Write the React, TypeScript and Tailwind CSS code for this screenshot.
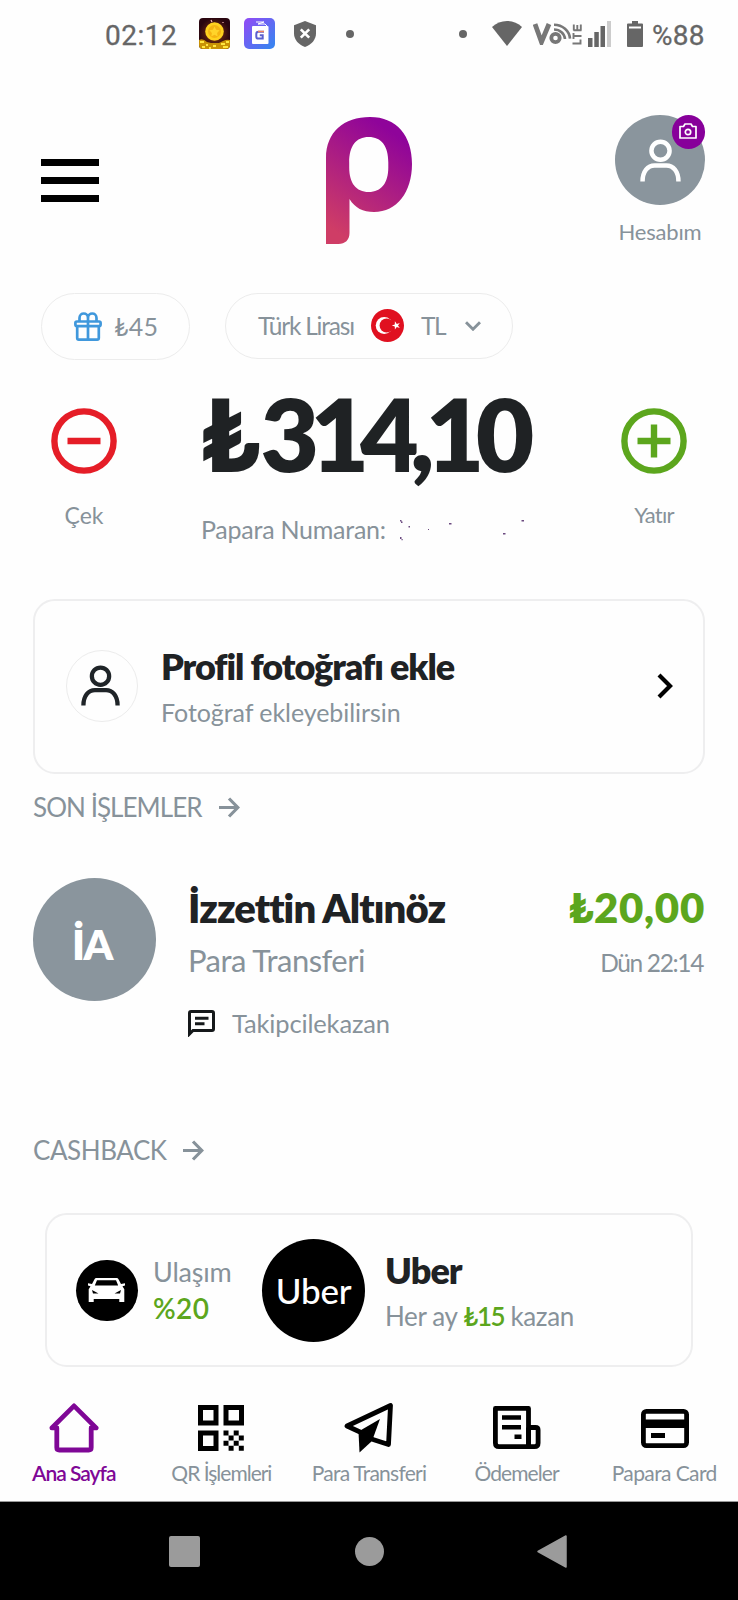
import React from "react";

function UserGlyph({ className }: { className?: string }) {
  return (
    <svg viewBox="0 0 42 44" className={className} fill="none" stroke="currentColor" strokeWidth="4.600">
      <circle cx="21" cy="12" r="9.300" />
      <path d="M2.600 43.500C2.600 33 8 27 15 27h12c7 0 12.400 6 12.400 16.500" />
    </svg>
  );
}

function ArrowRight() {
  return (
    <svg viewBox="0 0 21 21" className="h-[21px] w-[21px]" fill="none" stroke="#87929a" strokeWidth="3.200">
      <path d="M0 10.500h18.500M10 1.500l8.800 9-8.800 9" />
    </svg>
  );
}

function StatusBar() {
  return (
    <header className="flex h-[67px] w-[738px] items-center pl-[105px] text-[#666]">
      <span className="mt-1 w-[94px] whitespace-nowrap font-['Roboto',sans-serif] text-[28px] leading-8 tracking-[0.500px] [-webkit-text-stroke:0.300px_#666]">02:12</span>
      <svg viewBox="0 0 31 31" className="h-[31px] w-[31px]">
        <defs>
          <clipPath id="coinClip"><rect width="31" height="31" rx="4" /></clipPath>
          <radialGradient id="coinBg"><stop offset="0" stopColor="#8a3a12" /><stop offset="1" stopColor="#2a0610" /></radialGradient>
        </defs>
        <g clipPath="url(#coinClip)">
          <rect width="31" height="31" fill="url(#coinBg)" />
          <path d="M0 22q4-2 8 2l4 1h8l4-2q4-2 7-1v9H0z" fill="#c99205" />
          <path d="M1 24h4M7 27h2M14 28h3M22 26h4M27 24h3M3 29h3M24 29h5M10 30h2" stroke="#ffe640" strokeWidth="2" />
          <circle cx="15.500" cy="13.500" r="9.300" fill="#ffd21f" />
          <circle cx="15.500" cy="13.500" r="6.500" fill="#f5b412" />
          <path d="M15.500 8.500l1.600 3.300 3.600.5-2.600 2.600.6 3.600-3.200-1.700-3.200 1.700.6-3.600-2.600-2.600 3.600-.5z" fill="#ffd42a" />
          <path d="M12 2l1 2M24 4v1" stroke="#f5b8b8" strokeWidth="1.200" />
        </g>
      </svg>
      <svg viewBox="0 0 31 31" className="ml-[14px] h-[31px] w-[31px]">
        <defs>
          <linearGradient id="gBg" x1="0" y1="0" x2="1" y2="1"><stop offset="0.100" stopColor="#8a4ff5" /><stop offset="0.900" stopColor="#3b82f0" /></linearGradient>
        </defs>
        <rect width="31" height="31" rx="5" fill="url(#gBg)" />
        <path d="M12 4h8l-6 2h7l2 2" fill="none" stroke="#fff" strokeWidth="1" />
        <rect x="8" y="8" width="16.500" height="18" rx="1" fill="#fff" />
        <path d="M20 13.800h-5.500c-1.500 0-2.200.7-2.200 2.200v2.400c0 1.500.7 2.200 2.200 2.200h4.200v-3.400h-2.900" fill="none" stroke="#5b5fd0" strokeWidth="2" />
        <path d="M14 13.500h6" stroke="#f08060" strokeWidth="1.500" />
      </svg>
      <svg viewBox="0 0 22 26" className="ml-[19px] h-[26px] w-[22px]">
        <path d="M11 0l11 4.200v8.300c0 6-4.500 11.300-11 13.500C4.500 23.800 0 18.500 0 12.500V4.200z" fill="#666" />
        <path d="M6.800 8.300l8.400 8.400M15.200 8.300l-8.400 8.400" stroke="#fff" strokeWidth="2.600" />
      </svg>
      <span className="ml-[30px] h-2 w-2 rounded-full bg-[#666]" />
      <span className="ml-[105px] h-2 w-2 rounded-full bg-[#666]" />
      <svg viewBox="0 0 30 25" className="ml-[25px] h-[25px] w-[30px]">
        <path d="M0 6C8-2 22-2 30 6L15 25z" fill="#666" />
      </svg>
      <svg viewBox="0 0 49 22" className="ml-[11px] h-[22px] w-[49px]" fill="none" stroke="#777">
        <path d="M2 1l6.500 18L16 1" strokeWidth="4.800" />
        <circle cx="22.500" cy="15" r="4.200" strokeWidth="3.800" />
        <path d="M21 6.500c6 0 10.500 4 11 9.500" strokeWidth="2.600" />
        <path d="M21 1.700c8.500 0 15.500 6 16 14" strokeWidth="2.600" />
        <path d="M39.500 20.500h8.500M47.500 16.500v5M40.500 10v6M41 13h7.500M40.800 7.500V1.500M47.800 7.500V1.500M44.300 7V2M40.500 7.300h8" strokeWidth="1.900" />
      </svg>
      <svg viewBox="0 0 23 26" className="ml-[6px] h-[26px] w-[23px]">
        <path d="M0 17h4.500v9H0zM6.300 11h4.500v15H6.300zM12.500 5h4.500v21h-4.500z" fill="#666" />
        <path d="M19 0h4v26h-4z" fill="#ccc" />
      </svg>
      <svg viewBox="0 0 16 26" className="ml-4 h-[26px] w-4">
        <path d="M5 0h6v2.500h4q1 0 1 1V25q0 1-1 1H1q-1 0-1-1V3.500q0-1 1-1h4z" fill="#666" />
        <path d="M2 5.500h12v2H2z" fill="#fff" />
      </svg>
      <span className="ml-[9px] mt-1 whitespace-nowrap font-['Roboto',sans-serif] text-[28px] leading-8 tracking-[0.200px] [-webkit-text-stroke:0.300px_#666]">%88</span>
    </header>
  );
}

function TopBar() {
  return (
    <div className="flex h-[203px] w-[738px] items-start pl-[41px]">
      <button className="mt-[91.500px] flex w-[57.500px] flex-col gap-[10.500px]" aria-label="Menü">
        <span className="h-[7.500px] w-full bg-black" />
        <span className="h-[7.500px] w-full bg-black" />
        <span className="h-[7.500px] w-full bg-black" />
      </button>
      <svg viewBox="0 0 86 127" className="ml-[227.500px] mt-[50px] h-[127px] w-[86px]">
        <defs>
          <linearGradient id="brand" gradientUnits="userSpaceOnUse" x1="6" y1="112" x2="70" y2="18">
            <stop offset="0" stopColor="#cf3d66" />
            <stop offset="1" stopColor="#8f049a" />
          </linearGradient>
        </defs>
        <path
          fillRule="evenodd"
          fill="url(#brand)"
          d="M0 127V41C0 15 18 0 44 0c27 0 42 19 42 47 0 28-15 48-38 48-11 0-19-4-24.500-13v34c0 7-4.500 11-11 11zM42.700 20C30 20 23.200 29 23.200 45.500v5C23.200 66 30 75 42.700 75s19.600-9 19.600-24.500v-5C62.300 29 55.400 20 42.700 20z"
        />
      </svg>
      <div className="ml-[203px] mt-12 flex w-[90px] flex-col items-center">
        <div className="relative flex h-[90px] w-[90px] items-center justify-center rounded-full bg-[#8a959d] text-white">
          <UserGlyph className="h-[43px] w-[41px]" />
          <span className="absolute right-0 top-0 flex h-[33.500px] w-[33.500px] items-center justify-center rounded-full bg-[#87009a]">
            <svg viewBox="0 0 18 16" className="-mt-0.5 h-4 w-[18px]" fill="none" stroke="#fff" strokeWidth="1.700">
              <path d="M1 3.500h3.500L6 1h6l1.500 2.500H17V15H1z" strokeLinejoin="round" />
              <circle cx="9" cy="9" r="2.700" />
            </svg>
          </span>
        </div>
        <span className="mt-[14px] whitespace-nowrap text-[22px] leading-[26px] tracking-[-0.200px]">Hesabım</span>
      </div>
    </div>
  );
}

function Pills() {
  return (
    <div className="flex h-[110px] items-start pl-[41px] pt-[22.500px]">
      <div className="flex h-[67px] w-[149px] items-center rounded-full border-[1.500px] border-[#ececec] pl-[32px]">
        <svg viewBox="0 0 28 29" className="h-[29px] w-[28px]" fill="none" stroke="#4098dc" strokeWidth="2.700">
          <rect x="1.400" y="9.500" width="25.200" height="4.600" rx="1.500" />
          <path d="M3.200 14.500V26q0 1.600 1.600 1.600h18.400q1.600 0 1.600-1.600V14.500M14 9.500v18" />
          <path d="M5.500 9.500V6c0-6 8.500-6 8.500 0v3.500V6c0-6 8.500-6 8.500 0v3.500" />
        </svg>
        <span className="ml-3 whitespace-nowrap text-[25px] leading-[30px] tracking-[0.200px]">₺45</span>
      </div>
      <div className="ml-[35px] flex h-[66px] w-[288px] items-center rounded-full border-[1.500px] border-[#ececec] pl-[32px]">
        <span className="w-[113px] whitespace-nowrap text-[24.500px] leading-[30px] tracking-[-1.200px]">Türk Lirası</span>
        <svg viewBox="0 0 33 33" className="h-[33px] w-[33px]">
          <circle cx="16.500" cy="16.500" r="16.500" fill="#e01020" />
          <circle cx="13.200" cy="16.500" r="8.500" fill="#fff" />
          <circle cx="15.600" cy="16.500" r="7" fill="#e01020" />
          <path d="M20.800 16.500l3-1 .1-3.200 1.900 2.600 3-.9-1.800 2.500 1.800 2.600-3-1-1.900 2.500-.1-3.100z" fill="#fff" />
        </svg>
        <span className="ml-[17px] w-[42px] whitespace-nowrap text-[24.500px] leading-[30px] tracking-[-1.500px]">TL</span>
        <svg viewBox="0 0 16 10" className="ml-0.5 h-[10px] w-4" fill="none" stroke="#87929a" strokeWidth="2.900">
          <path d="M1 1.200l7 7 7-7" />
        </svg>
      </div>
    </div>
  );
}

function Balance() {
  return (
    <div className="flex h-[219px] items-start">
      <div className="ml-[51px] mt-[28px] flex w-[66px] flex-col items-center">
        <svg viewBox="0 0 66 66" className="h-[66px] w-[66px]" fill="none" stroke="#e51d27" strokeWidth="6.400">
          <circle cx="33" cy="33" r="29.600" />
          <path d="M16.500 33h33" />
        </svg>
        <span className="mt-7 whitespace-nowrap text-[23px] leading-[26px]">Çek</span>
      </div>
      <div className="ml-[84px] mt-[3px] w-[335px]">
        <div className="whitespace-nowrap text-[101px] font-extrabold leading-[100px] tracking-[-8.700px] text-[#1f2224]">
          <span className="tracking-[1px]">₺</span>314,10
        </div>
        <div className="mt-[31px] flex items-center">
          <span className="w-[197px] whitespace-nowrap text-[25px] leading-[30px] tracking-[-0.250px]">Papara Numaran:</span>
          <svg viewBox="0 0 130 24" className="h-6 w-[130px]" fill="#6b4a80">
            <path d="M2 3h1.500v1.500H2zM3 4.500h1.500V6H3zM10.500 9h1.500v1.500h-1.500zM2 20h1.500v2H2zM3.500 22h1.200v1.200H3.500zM30 12h1v1h-1zM51 6h2.500v1.500H51zM123.500 3h2.500v1.500h-2.500zM105 16h2.500v1.500H105z" />
          </svg>
        </div>
      </div>
      <div className="ml-[85px] mt-[28px] flex w-[66px] flex-col items-center">
        <svg viewBox="0 0 66 66" className="h-[66px] w-[66px]" fill="none" stroke="#5ca61d" strokeWidth="6.400">
          <circle cx="33" cy="33" r="29.600" />
          <path d="M16.500 33h33M33 16.500v33" />
        </svg>
        <span className="mt-7 whitespace-nowrap text-[22px] leading-[26px] tracking-[-0.800px]">Yatır</span>
      </div>
    </div>
  );
}

function ProfileCard() {
  return (
    <div className="ml-[33px] flex h-[175px] w-[672px] items-center rounded-[22px] border-2 border-[#eeeeef] pb-[2px] pl-[31px]">
      <div className="flex h-[72px] w-[72px] items-center justify-center rounded-full border-[1.500px] border-[#ececec] text-[#1f2428]">
        <UserGlyph className="-ml-[3px] h-[41px] w-[39px]" />
      </div>
      <div className="ml-[23px] w-[496px]">
        <div className="whitespace-nowrap text-[36px] font-extrabold leading-[44px] tracking-[-1.050px] text-[#1f2224]">Profil fotoğrafı ekle</div>
        <div className="mt-[9px] whitespace-nowrap text-[25px] leading-[30px] tracking-[-0.060px]">Fotoğraf ekleyebilirsin</div>
      </div>
      <svg viewBox="0 0 16 26" className="h-[26px] w-4" fill="none" stroke="#000" strokeWidth="4.200">
        <path d="M2 2l11 11L2 24" />
      </svg>
    </div>
  );
}

function Transactions() {
  return (
    <section className="h-[360px] pl-[33px] pt-[17px]">
      <div className="flex h-8 items-center">
        <span className="w-[186px] whitespace-nowrap text-[26px] leading-8 tracking-[-0.950px]">SON İŞLEMLER</span>
        <ArrowRight />
      </div>
      <div className="mt-[55px] flex w-[672px] items-start">
        <div className="flex h-[123px] w-[123px] items-center justify-center rounded-full bg-[#8a959d]">
          <span className="-ml-[5px] mt-[9px] whitespace-nowrap text-[42px] font-extrabold leading-[48px] tracking-[-1.400px] text-white">İA</span>
        </div>
        <div className="ml-8 mt-[6px]">
          <div className="whitespace-nowrap text-[40px] font-extrabold leading-[48px] tracking-[-0.900px] text-[#1f2224]">İzzettin Altınöz</div>
          <div className="mt-[9px] whitespace-nowrap text-[31px] leading-[38px] tracking-[-0.550px]">Para Transferi</div>
          <div className="mt-[29px] flex h-[30px] items-center">
            <svg viewBox="0 0 27 27" className="h-[27px] w-[27px]" fill="none" stroke="#15181a" strokeWidth="3">
              <path d="M1.500 24V3q0-1.500 1.500-1.500h21q1.500 0 1.500 1.500v16q0 1.500-1.500 1.500H5z" />
              <path d="M7 8.200h13.500M7 13.700h9.500" />
            </svg>
            <span className="ml-[17px] whitespace-nowrap text-[25.500px] leading-[30px] tracking-[-0.150px]">Takipcilekazan</span>
          </div>
        </div>
        <div className="ml-auto mt-[5px] flex flex-col items-end">
          <div className="whitespace-nowrap text-[42px] font-extrabold leading-[48px] tracking-[0.700px] text-[#5ca61d]">₺20,00</div>
          <div className="mt-[17px] whitespace-nowrap pr-0.5 text-[24.500px] leading-[30px] tracking-[-1.350px]">Dün 22:14</div>
        </div>
      </div>
    </section>
  );
}

function Cashback() {
  return (
    <section className="h-[268px] pl-[33px]">
      <div className="flex h-8 items-center">
        <span className="w-[150px] whitespace-nowrap text-[26px] leading-8 tracking-[-0.450px]">CASHBACK</span>
        <ArrowRight />
      </div>
      <div className="ml-3 mt-[47px] flex h-[154px] w-[648px] items-center rounded-[22px] border-2 border-[#eeeeef] pl-[29px]">
        <div className="flex h-[61px] w-[62px] items-center justify-center rounded-full bg-black">
          <svg viewBox="0 0 37 24" className="-ml-0.5 h-6 w-[37px]">
            <path fillRule="evenodd" fill="#fff" d="M8.500 0h20q1.500 0 2 1.300L33 6l4-.8v2.300l-2.500.8 1.800 3V24h-5v-3H5.700v3h-5V11.300l1.800-3L0 7.500V5.200L4 6l2.500-4.700Q7 0 8.500 0zM9 2.200L6.800 7.500h23.400L28 2.200zM4 12l1 3.500h5.500zM33 12l-1 3.500h-5.500z" />
          </svg>
        </div>
        <div className="ml-[15px] w-[109px]">
          <div className="whitespace-nowrap text-[27px] leading-8 tracking-[-0.200px]">Ulaşım</div>
          <div className="mt-1 whitespace-nowrap text-[28px] font-semibold leading-8 tracking-[0.400px] text-[#5ca61d]">%20</div>
        </div>
        <div className="flex h-[103px] w-[103px] items-center justify-center rounded-full bg-black">
          <span className="whitespace-nowrap text-[35px] font-medium leading-10 tracking-[-0.300px] text-white">Uber</span>
        </div>
        <div className="ml-[20px]">
          <div className="whitespace-nowrap text-[36px] font-extrabold leading-[44px] tracking-[-1px] text-[#1f2224]">Uber</div>
          <div className="mt-2 whitespace-nowrap text-[26px] leading-8 tracking-[-0.350px]">
            Her ay <span className="font-semibold tracking-[-1.500px] text-[#5ca61d]">₺15</span> kazan
          </div>
        </div>
      </div>
    </section>
  );
}

function BottomNav() {
  return (
    <nav className="grid h-[100px] w-[738px] grid-cols-5 border-b border-[#999] pt-px text-[21px] leading-[26px]">
      <div className="flex flex-col items-center">
        <svg viewBox="0 0 50 50" className="h-[50px] w-[50px]" fill="none" stroke="#7f0796" strokeWidth="4.800" strokeLinejoin="round" strokeLinecap="round">
          <path d="M7.800 25v19.500q0 2.500 2.500 2.500h29.400q2.500 0 2.500-2.500V25" />
          <path d="M7.800 25H2.800L25 2.800 47.200 25h-5" strokeWidth="4.600" />
        </svg>
        <span className="mt-[7px] whitespace-nowrap font-semibold tracking-[-1px] text-[#7f0796]">Ana Sayfa</span>
      </div>
      <div className="flex flex-col items-center">
        <svg viewBox="0 0 46 46" className="mb-[2px] mt-[2px] h-[46px] w-[46px]">
          <path fill="none" stroke="#000" strokeWidth="5" d="M2.500 2.500h15.500v15.500H2.500zM28 2.500h15.500v15.500H28zM2.500 28h15.500v15.500H2.500z" />
          <path d="M25.500 25.500h5v5h-5zM35.700 25.500h5v5h-5zM30.600 30.600h5v5h-5zM40.800 30.600h5v5h-5zM25.500 35.700h5v5h-5zM35.700 35.700h5v5h-5zM30.600 40.800h5v5h-5zM40.800 40.800h5v5h-5z" />
        </svg>
        <span className="mt-[7px] whitespace-nowrap tracking-[-1px]">QR İşlemleri</span>
      </div>
      <div className="flex flex-col items-center">
        <svg viewBox="0 0 50 50" className="h-[50px] w-[50px]">
          <path d="M3 23L46.500 2.500 44.500 41.500 29 36.500 16 29z" fill="none" stroke="#000" strokeWidth="4.800" strokeLinejoin="round" />
          <path d="M14.500 28.500L36 16 28 38 15.500 49.500z" />
        </svg>
        <span className="mt-[7px] whitespace-nowrap tracking-[-0.750px]">Para Transferi</span>
      </div>
      <div className="flex flex-col items-center">
        <svg viewBox="0 0 48 43" className="mb-1 mt-[3px] h-[43px] w-[48px]" fill="none" stroke="#000" strokeWidth="4.800">
          <path d="M35.500 40.600H6q-3.600 0-3.600-3.600V2.400h33.100z" strokeLinejoin="round" />
          <path d="M35.500 21.500h7q2.600 0 2.600 2.600V37q0 3.600-3.600 3.600h-6V21.500" />
          <path d="M9 11.500h19M9 21.300h19M21.500 30.700h7" strokeWidth="4.600" />
        </svg>
        <span className="mt-[7px] whitespace-nowrap tracking-[-0.900px]">Ödemeler</span>
      </div>
      <div className="flex flex-col items-center">
        <svg viewBox="0 0 48 39" className="mb-[5px] ml-0.5 mt-[6px] h-[39px] w-[48px]">
          <rect x="2.400" y="2.400" width="43.200" height="34.200" rx="3" fill="none" stroke="#000" strokeWidth="4.800" />
          <path d="M2 10.500h44v8.500H2zM10 24h14v5H10z" />
        </svg>
        <span className="mt-[7px] whitespace-nowrap tracking-[-0.600px]">Papara Card</span>
      </div>
    </nav>
  );
}

function SystemNav() {
  return (
    <footer className="flex h-[98px] w-[738px] items-center bg-black pl-[169px]">
      <span className="h-[31px] w-[31px] rounded-[2px] bg-[#9b9b9b]" />
      <span className="ml-[154.500px] h-[29px] w-[29px] rounded-full bg-[#9b9b9b]" />
      <svg viewBox="0 0 30 33" className="ml-[153px] h-[33px] w-[30px]">
        <path d="M1 16.500L29 1v31z" fill="#9b9b9b" stroke="#9b9b9b" strokeWidth="1.500" strokeLinejoin="round" />
      </svg>
    </footer>
  );
}

export default function App() {
  return (
    <div className="h-[1600px] w-[738px] overflow-hidden bg-[#fefefe] font-['Lato',sans-serif] text-[#87929a]">
      <StatusBar />
      <TopBar />
      <Pills />
      <Balance />
      <ProfileCard />
      <Transactions />
      <Cashback />
      <BottomNav />
      <SystemNav />
    </div>
  );
}
